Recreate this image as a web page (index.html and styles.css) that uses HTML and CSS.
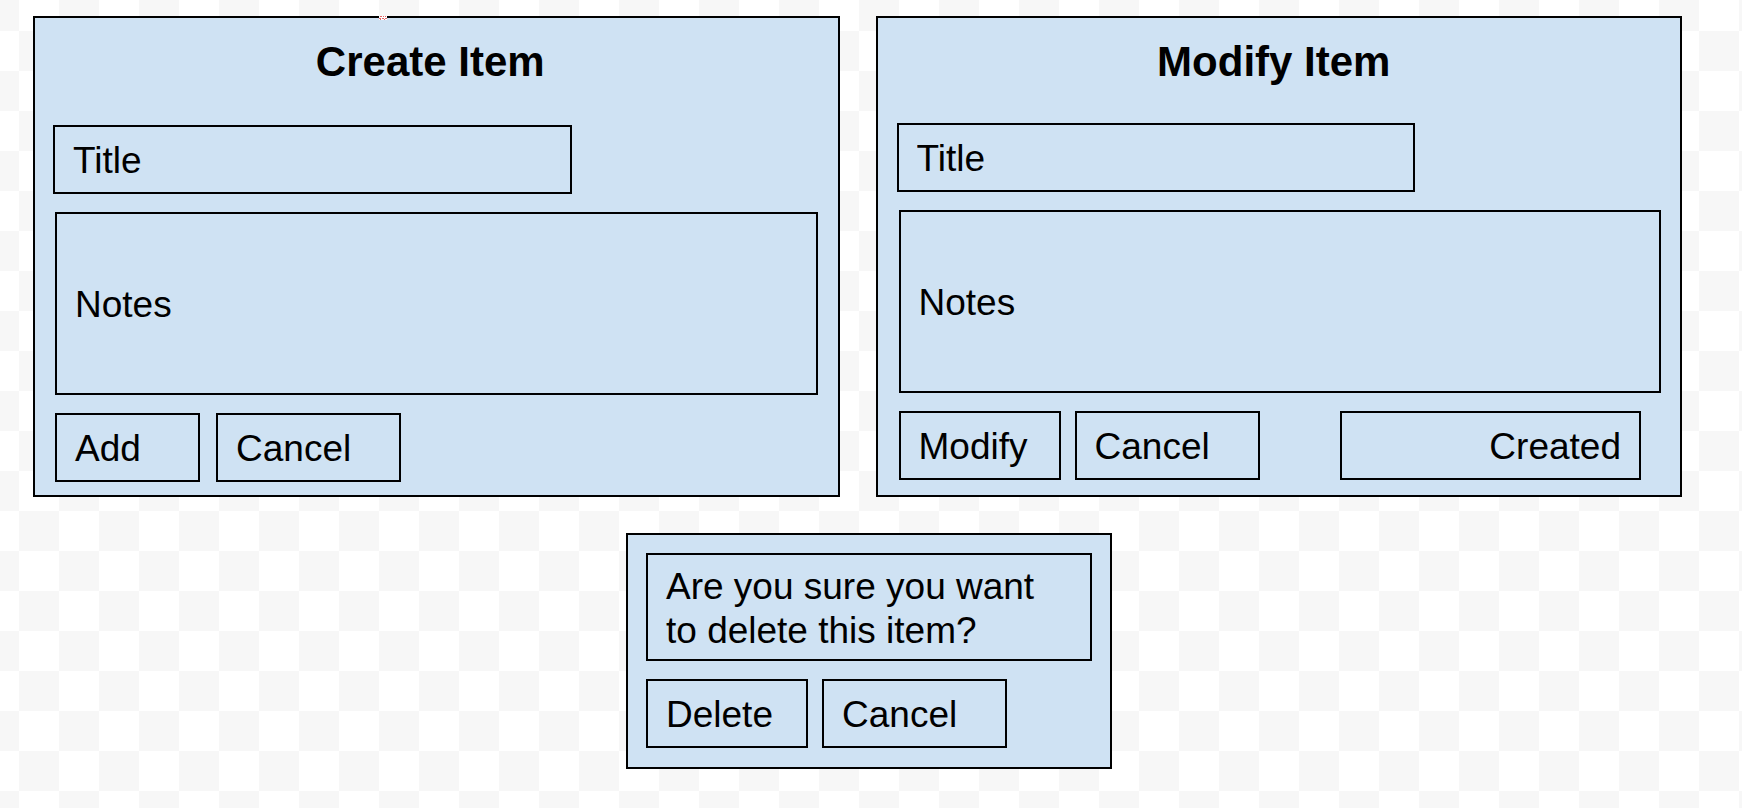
FILE: index.html
```html
<!DOCTYPE html>
<html lang="en">
<head>
  <meta charset="utf-8">
  <meta name="viewport" content="width=device-width, initial-scale=1">
  <title>Item dialogs</title>
  <link rel="stylesheet" href="styles.css">
</head>
<body>
  <main class="board">
    <div class="forms">
      <form class="panel panel-create">
        <svg class="mark" viewBox="0 0 8 4" aria-hidden="true">
          <path fill="#fff" d="M0 0h8v4h-8z"/>
          <path fill="#e06666" d="M1 0h2v1h-2zM4 0h1v1h-1zM6 0h1v1h-1zM0 2h2v1h-2zM3 2h2v1h-2zM6 2h2v1h-2zM1 3h1v1h-1zM5 3h1v1h-1z"/>
        </svg>
        <h2 class="heading">Create Item</h2>
        <input class="box title" type="text" value="Title" aria-label="Title">
        <textarea class="box notes" rows="1" aria-label="Notes">Notes</textarea>
        <div class="actions">
          <button class="box button-small" type="button">Add</button>
          <button class="box button-large" type="button">Cancel</button>
        </div>
      </form>
      <form class="panel panel-modify">
        <h2 class="heading">Modify Item</h2>
        <input class="box title" type="text" value="Title" aria-label="Title">
        <textarea class="box notes" rows="1" aria-label="Notes">Notes</textarea>
        <div class="actions">
          <button class="box button-medium" type="button">Modify</button>
          <button class="box button-large" type="button">Cancel</button>
          <input class="box created" type="text" value="Created" aria-label="Created" readonly>
        </div>
      </form>
    </div>
    <div class="confirm">
      <section class="panel panel-delete" role="dialog" aria-labelledby="question">
        <p class="box message" id="question">Are you sure you want to delete this item?</p>
        <div class="actions">
          <button class="box button-medium" type="button">Delete</button>
          <button class="box button-large" type="button">Cancel</button>
        </div>
      </section>
    </div>
  </main>
</body>
</html>
```
FILE: styles.css
```css
* {
  box-sizing: border-box;
}

body {
  margin: 0;
  min-height: 100vh;
  color: #000;
  font: 37px/44px "Liberation Sans", Arial, sans-serif;
  background: repeating-conic-gradient(#f7f7f7 0 25%, #fff 0 50%) -21px 31px / 80px 80px;
}

.board {
  display: flex;
  flex-direction: column;
  gap: 36px;
  padding: 16px 0;
}

.forms {
  display: grid;
  grid-template-columns: 1fr 1fr;
  gap: 36px;
  padding: 0 60px 0 33px;
}

.confirm {
  display: flex;
  justify-content: center;
  padding-right: 4px;
}

.panel {
  position: relative;
  display: flex;
  flex-direction: column;
  gap: 18px;
  border: 2px solid #000;
  background: #cfe2f3;
}

.panel-create {
  padding: 21px 20px 13px;
}

.panel-modify {
  padding: 21px 19px 15px 21px;
}

.panel-delete {
  width: 486px;
  padding: 18px 18px 19px;
}

.heading {
  margin: 0 12px 22px 0;
  font-size: 42px;
  line-height: 46px;
  text-align: center;
}

.panel-modify .heading {
  margin-bottom: 20px;
}

.box {
  display: block;
  margin: 0;
  padding: 12px 18px 9px;
  border: 2px solid #000;
  border-radius: 0;
  background: transparent;
  color: inherit;
  font: inherit;
  text-align: left;
}

.title {
  width: 68%;
  height: 69px;
  margin-left: -2px;
}

.notes {
  width: 100%;
  height: 183px;
  padding: 69px 18px 66px;
  overflow: hidden;
  resize: none;
}

.message {
  padding: 10px 18px 6px;
}

.actions {
  display: flex;
  gap: 14px;
}

.panel-create .actions {
  gap: 16px;
}

.button-small {
  width: 145px;
}

.button-medium {
  width: 162px;
}

.button-large {
  width: 185px;
}

.created {
  width: 301px;
  height: 69px;
  margin: 0 20px 0 auto;
  text-align: right;
}

.mark {
  position: absolute;
  top: -2px;
  left: 344px;
  width: 8px;
  height: 4px;
}
```
